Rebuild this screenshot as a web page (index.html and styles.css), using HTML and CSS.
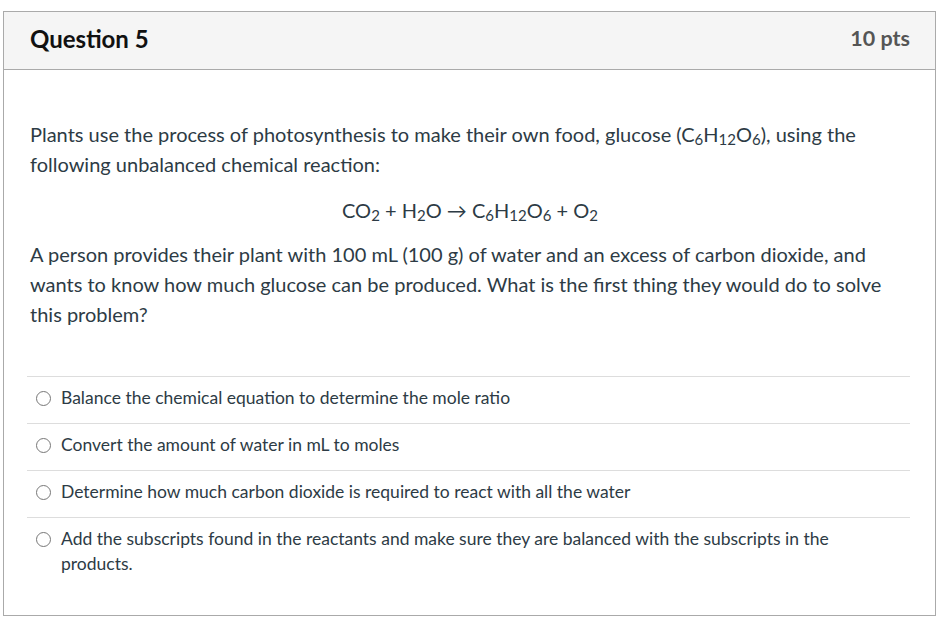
FILE: index.html
```html
<!DOCTYPE html>
<html>
<head>
<meta charset="utf-8">
<link rel="stylesheet" href="styles.css">
</head>
<body>
<div class="card">
  <div class="header">
    <span class="title">Question 5</span>
    <span class="pts">10 pts</span>
  </div>
  <div class="body">
    <p class="para first">Plants use the process of photosynthesis to make their own food, glucose (C<sub>6</sub>H<sub>12</sub>O<sub>6</sub>), using the following unbalanced chemical reaction:</p>
    <p class="equation">CO<sub>2</sub> + H<sub>2</sub>O → C<sub>6</sub>H<sub>12</sub>O<sub>6</sub> + O<sub>2</sub></p>
    <p class="para">A person provides their plant with 100 mL (100 g) of water and an excess of carbon dioxide, and wants to know how much glucose can be produced. What is the first thing they would do to solve this problem?</p>
    <div class="answers">
      <div class="answer"><span class="radio"></span><span class="label">Balance the chemical equation to determine the mole ratio</span></div>
      <div class="answer"><span class="radio"></span><span class="label">Convert the amount of water in mL to moles</span></div>
      <div class="answer"><span class="radio"></span><span class="label">Determine how much carbon dioxide is required to react with all the water</span></div>
      <div class="answer"><span class="radio"></span><span class="label">Add the subscripts found in the reactants and make sure they are balanced with the subscripts in the products.</span></div>
    </div>
  </div>
</div>
</body>
</html>
```
FILE: styles.css
```css
html, body {
  margin: 0;
  padding: 0;
  background: #fff;
}
body {
  font-family: Lato, "Noto Sans", sans-serif;
  color: #2d3b45;
  padding: 11px 0 0 3px;
}
.card {
  width: 933px;
  height: 605px;
  box-sizing: border-box;
  border: 1px solid #aaaaaa;
}
.header {
  height: 58px;
  background: #f5f5f5;
  border-bottom: 1px solid #aaaaaa;
  display: flex;
  align-items: center;
  justify-content: space-between;
  padding: 0 25px 5px 26px;
  box-sizing: border-box;
}
.title {
  font-size: 24px;
  font-weight: 700;
  color: #111;
}
.pts {
  font-size: 21.5px;
  font-weight: 700;
  color: #555;
}
.body {
  padding: 49px 25px 0 26px;
}
.para {
  margin: 0;
  font-size: 20px;
  line-height: 30px;
}
.equation {
  margin: 16px 0 14px;
  font-size: 20px;
  line-height: 30px;
  text-align: center;
}
sub {
  font-size: 0.75em;
  vertical-align: -0.2em;
  line-height: 1;
}
.answers {
  margin: 47px 0 0 -3px;
}
.answer {
  display: flex;
  align-items: flex-start;
  border-top: 1px solid #dddddd;
  padding: 8px 0 13px 9px;
  font-size: 17.5px;
  line-height: 25px;
}
.radio {
  flex: none;
  width: 15px;
  height: 15px;
  box-sizing: border-box;
  border: 1.5px solid #777;
  border-radius: 50%;
  margin: 6px 10px 0 0;
}
.label {
  padding-right: 60px;
}
```
